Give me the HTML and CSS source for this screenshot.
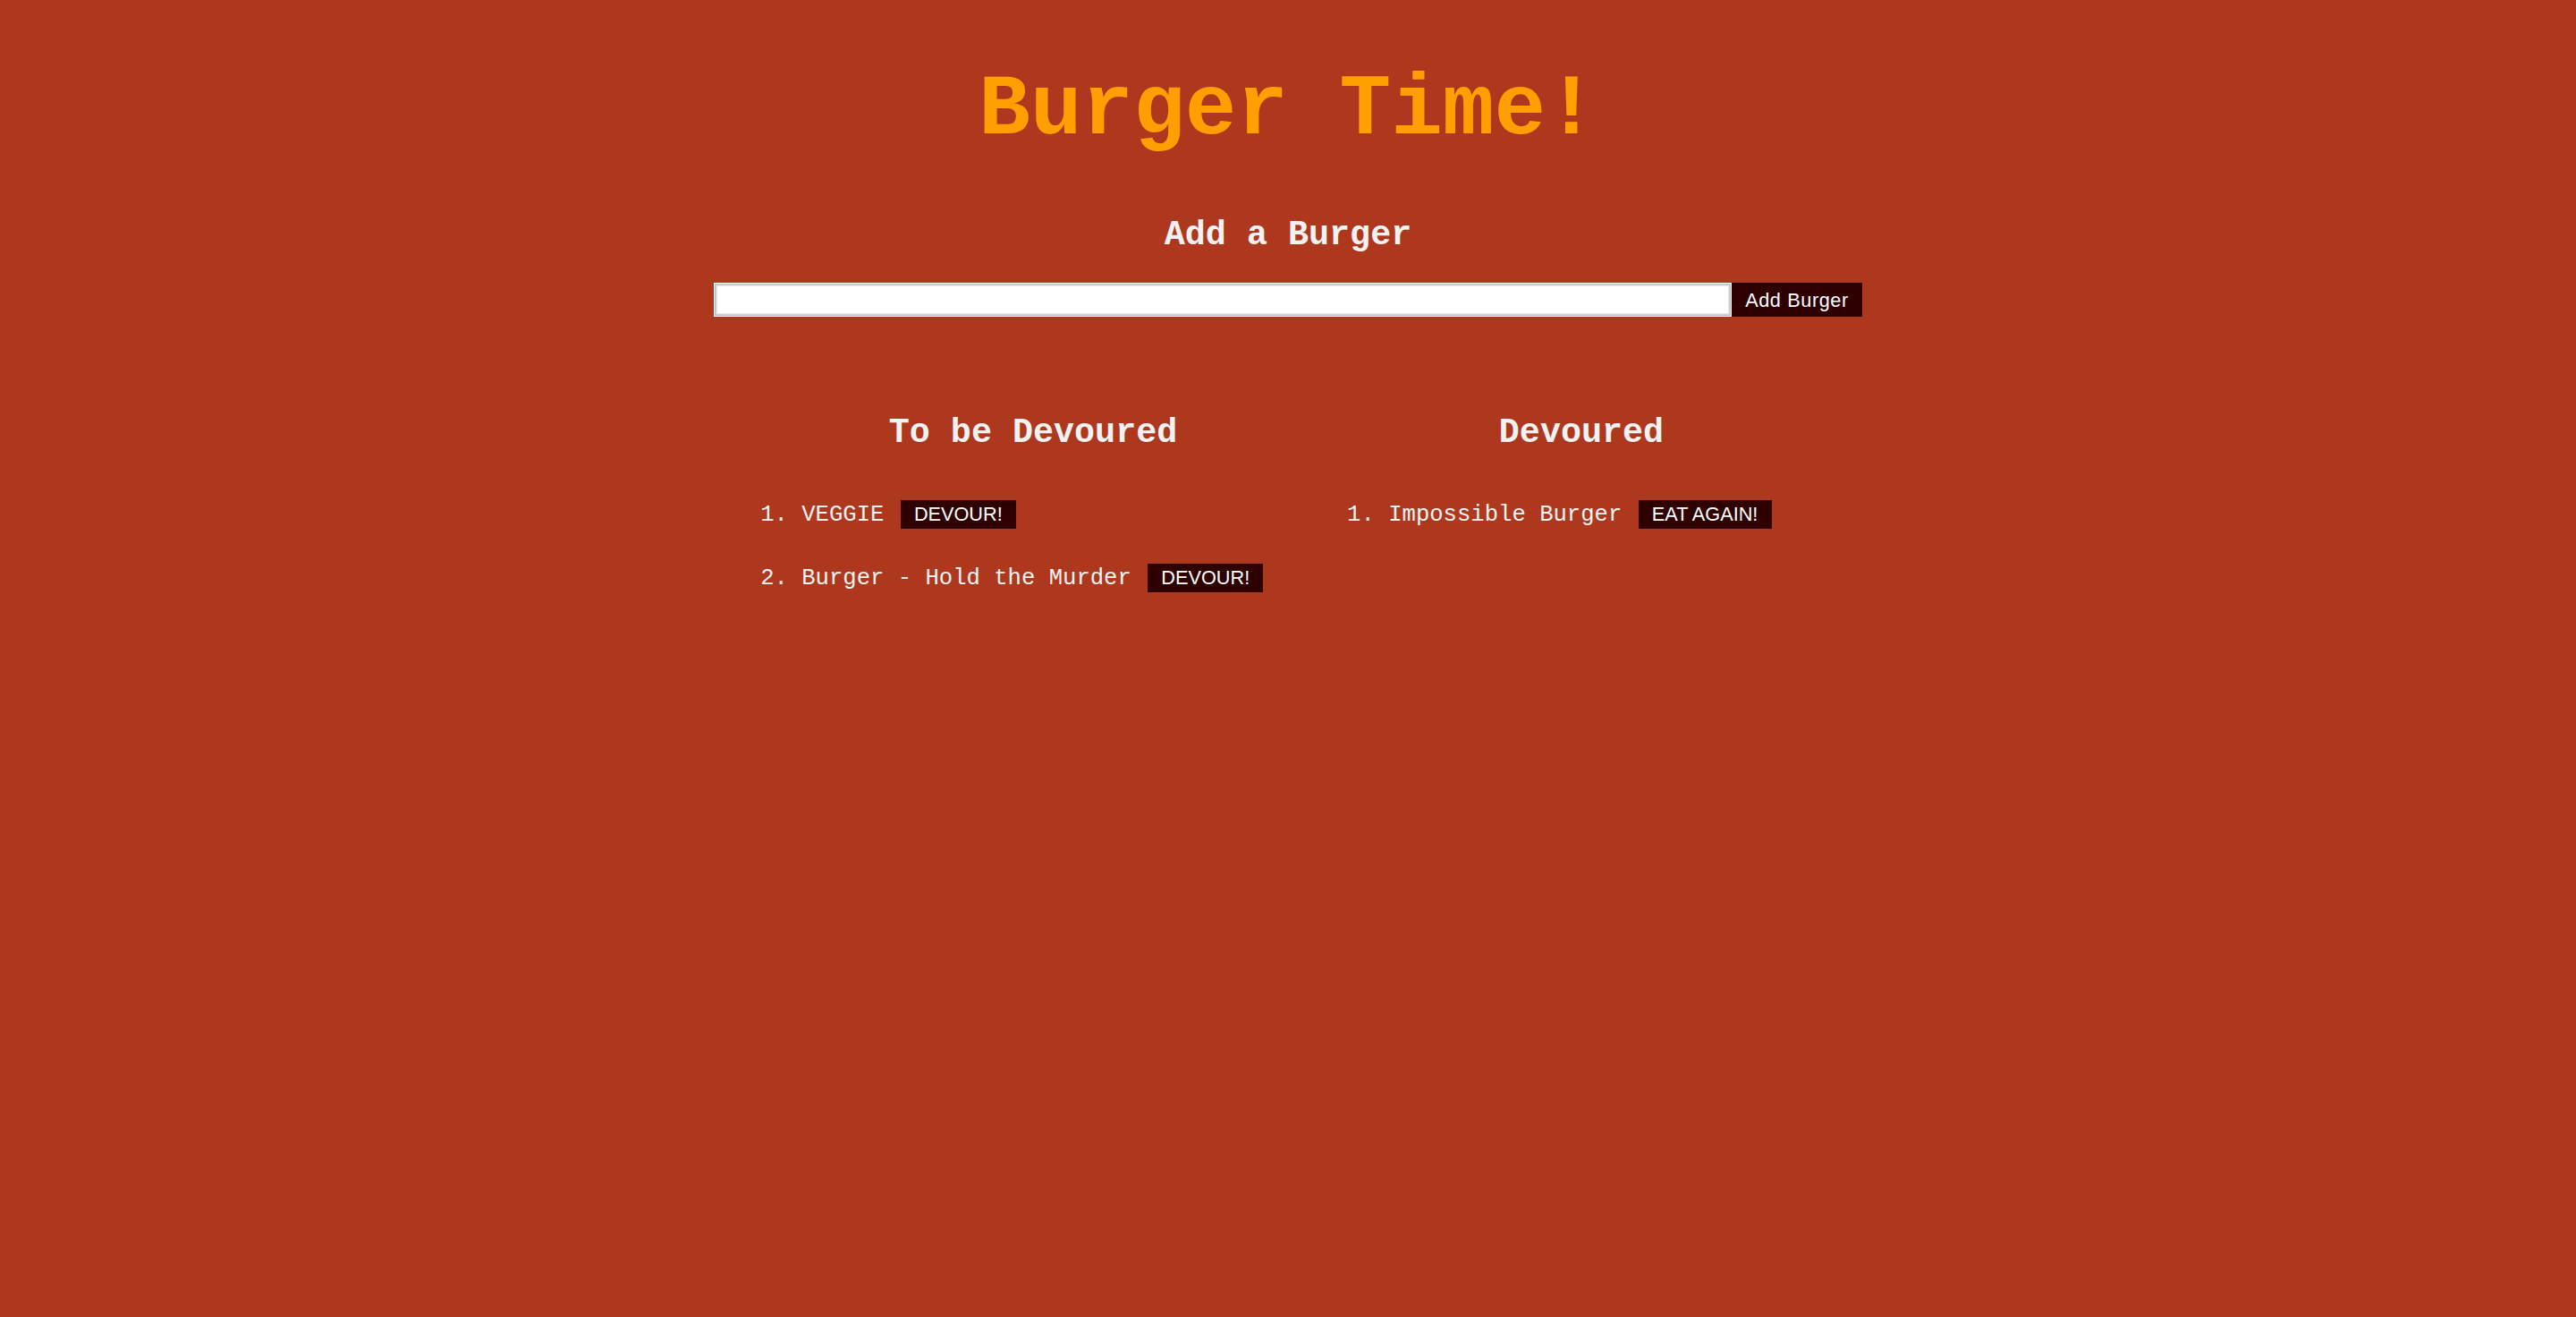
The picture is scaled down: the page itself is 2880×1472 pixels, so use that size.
FILE: index.html
```html
<!DOCTYPE html>
<html lang="en">
<head>
<meta charset="utf-8">
<title>Burger Time!</title>
<link rel="stylesheet" href="styles.css">
</head>
<body>
  <h1 class="title">Burger Time!</h1>
  <h2 class="subtitle">Add a Burger</h2>
  <form class="add-form">
    <input class="add-input" type="text" name="burger">
    <button class="add-btn" type="button">Add Burger</button>
  </form>
  <div class="columns">
    <section class="col">
      <h2 class="col-title">To be Devoured</h2>
      <ol class="burger-list">
        <li>VEGGIE <button class="act-btn" type="button">DEVOUR!</button></li>
        <li>Burger - Hold the Murder <button class="act-btn" type="button">DEVOUR!</button></li>
      </ol>
    </section>
    <section class="col">
      <h2 class="col-title">Devoured</h2>
      <ol class="burger-list">
        <li>Impossible Burger <button class="act-btn" type="button">EAT AGAIN!</button></li>
      </ol>
    </section>
  </div>
</body>
</html>
```
FILE: styles.css
```css
html, body {
  margin: 0;
  padding: 0;
}
body {
  background: #ae381d;
  font-family: "Liberation Mono", "Courier New", monospace;
  color: #f2f2f2;
  min-height: 1472px;
}
.title {
  margin: 69px 0 0;
  font-size: 96px;
  line-height: 109px;
  font-weight: bold;
  color: #ffa000;
  text-align: center;
}
.subtitle {
  margin: 64px 0 0;
  font-size: 38.4px;
  line-height: 43.5px;
  font-weight: bold;
  text-align: center;
  color: #f2f2f2;
}
.add-form {
  margin: 30.5px 0 0;
  display: flex;
  justify-content: center;
}
.add-input {
  box-sizing: border-box;
  width: 1138px;
  height: 38px;
  margin: 0;
  padding: 0 6px;
  border: 1px solid #ffffff;
  box-shadow: inset 0 0 0 1.5px #bfbfbf, inset 0 0 0 3px #e6e6e6;
  background: #ffffff;
  font-size: 21.33px;
  outline: none;
}
.add-btn {
  box-sizing: border-box;
  width: 146px;
  height: 38px;
  margin: 0;
  padding: 1px 0 0;
  border: 0;
  background: #2e0000;
  color: #ffffff;
  font-family: "Liberation Sans", Arial, sans-serif;
  font-size: 21.7px;
  line-height: 36px;
  letter-spacing: 0.6px;
  text-align: center;
}
.columns {
  margin-top: 109px;
  display: grid;
  grid-template-columns: 652.8px 566.8px;
  column-gap: 3.2px;
  justify-content: center;
}
.col {
  padding: 0 1.6px;
}
.col-title {
  margin: 0;
  font-size: 38.4px;
  line-height: 43.5px;
  font-weight: bold;
  text-align: center;
  color: #f2f2f2;
}
.burger-list {
  margin: 52.5px 0 0;
  padding: 0 0 0 66px;
  font-size: 25.6px;
  line-height: 29px;
}
.burger-list li {
  margin: 0 0 39px;
  white-space: nowrap;
}
.act-btn {
  display: inline-block;
  margin: 0 0 0 3px;
  padding: 4px 15.2px;
  border: 0;
  background: #2e0000;
  color: #ffffff;
  font-family: "Liberation Sans", Arial, sans-serif;
  font-size: 21.7px;
  line-height: 24px;
}
```
